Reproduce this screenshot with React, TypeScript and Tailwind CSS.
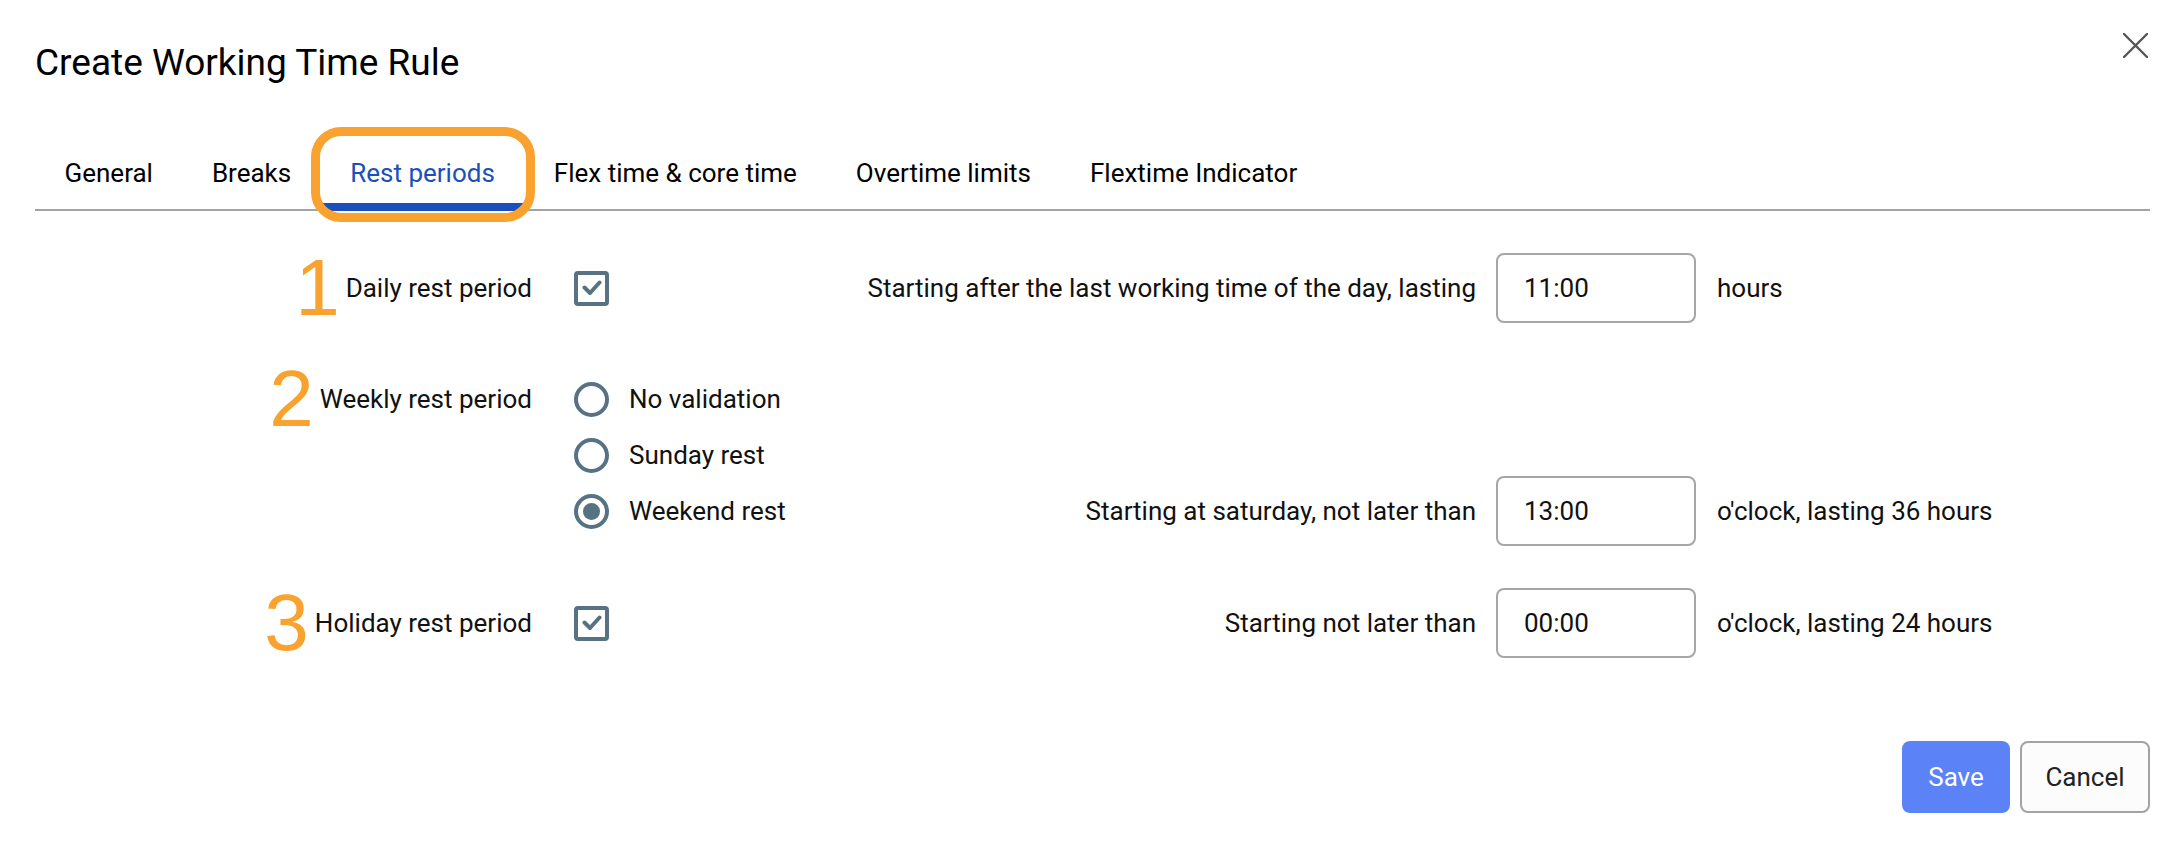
import { ReactNode } from 'react'

const TABS = [
  'General',
  'Breaks',
  'Rest periods',
  'Flex time & core time',
  'Overtime limits',
  'Flextime Indicator',
]

function Marker({ n }: { n: string }) {
  return (
    <span className="font-['Liberation_Sans','Arial',sans-serif] text-[80px] leading-none text-[#f9a22f]">
      {n}
    </span>
  )
}

function Checkbox() {
  return (
    <div className="flex h-[35px] w-[35px] items-center justify-center rounded-[4px] border-[4px] border-[#577383]">
      <svg width="20" height="16" viewBox="0 0 20 16" fill="none">
        <path
          d="M2.5 7.5 L8 13 L17.5 2.5"
          stroke="#577383"
          strokeWidth="4"
          strokeLinecap="round"
          strokeLinejoin="round"
        />
      </svg>
    </div>
  )
}

function Radio({ checked, label }: { checked?: boolean; label: string }) {
  return (
    <div className="flex items-center gap-[20px]">
      <div className="flex h-[35px] w-[35px] items-center justify-center rounded-full border-[4px] border-[#577383]">
        {checked && <div className="h-[17px] w-[17px] rounded-full bg-[#577383]" />}
      </div>
      <span>{label}</span>
    </div>
  )
}

function TimeInput({ value }: { value: string }) {
  return (
    <div className="ml-[20px] flex h-[70px] w-[200px] items-center rounded-[8px] border-2 border-[#a6a6a6] pl-[26px] text-[#111]">
      {value}
    </div>
  )
}

function Row({
  height,
  label,
  marker,
  control,
  desc,
  value,
  suffix,
  className = '',
}: {
  height: string
  label?: string
  marker?: string
  control?: ReactNode
  desc?: string
  value?: string
  suffix?: string
  className?: string
}) {
  return (
    <div className={`flex items-center ${height} ${className}`}>
      <div className="flex w-[497px] items-center justify-end gap-[6px]">
        {marker && <Marker n={marker} />}
        {label && <span>{label}</span>}
      </div>
      <div className="ml-[42px] flex w-[902px] items-center justify-between">
        <div>{control}</div>
        {desc && <span>{desc}</span>}
      </div>
      {value && <TimeInput value={value} />}
      {suffix && <span className="ml-[21px]">{suffix}</span>}
    </div>
  )
}

export default function App() {
  return (
    <div className="min-h-screen bg-white pl-[35px] pr-[30px] font-['Roboto',sans-serif] text-[26px] text-[#111]">
      {/* Header */}
      <div className="flex items-start justify-between pt-[33px]">
        <h1 className="mt-[12px] text-[37px] leading-[36px] font-normal text-black">
          Create Working Time Rule
        </h1>
        <button className="mr-[2px]">
          <svg width="25" height="25" viewBox="0 0 25 25" fill="none">
            <path d="M1 1 L24 24 M24 1 L1 24" stroke="#555" strokeWidth="2.4" strokeLinecap="round" />
          </svg>
        </button>
      </div>

      {/* Tabs */}
      <div className="mt-[77px] flex border-b-2 border-[#a3a3a3]">
        {TABS.map((t) => {
          const active = t === 'Rest periods'
          return (
            <div
              key={t}
              className={`relative -mb-[2px] border-b-[8px] px-[29.5px] pb-[15px] leading-[30px] ${
                active ? 'border-[#1b4fbb] text-[#1b4fbb]' : 'border-transparent text-black'
              }`}
            >
              {t}
              {active && (
                <div className="pointer-events-none absolute -top-[31px] -right-[11px] -bottom-[19px] -left-[10px] rounded-[30px] border-[9px] border-[#f9a22f]" />
              )}
            </div>
          )
        })}
      </div>

      {/* Form */}
      <div className="mt-[42px]">
        <Row
          height="h-[70px]"
          marker="1"
          label="Daily rest period"
          control={<Checkbox />}
          desc="Starting after the last working time of the day, lasting"
          value="11:00"
          suffix="hours"
        />
        <Row
          height="h-[56px]"
          className="mt-[48px]"
          marker="2"
          label="Weekly rest period"
          control={<Radio label="No validation" />}
        />
        <Row height="h-[56px]" control={<Radio label="Sunday rest" />} />
        <Row
          height="h-[56px]"
          control={<Radio checked label="Weekend rest" />}
          desc="Starting at saturday, not later than"
          value="13:00"
          suffix="o'clock, lasting 36 hours"
        />
        <Row
          height="h-[70px]"
          className="mt-[49px]"
          marker="3"
          label="Holiday rest period"
          control={<Checkbox />}
          desc="Starting not later than"
          value="00:00"
          suffix="o'clock, lasting 24 hours"
        />
      </div>

      {/* Footer */}
      <div className="mt-[83px] flex justify-end gap-[10px]">
        <button className="h-[72px] w-[108px] rounded-[8px] bg-[#5b83f7] text-white">Save</button>
        <button className="h-[72px] w-[130px] rounded-[8px] border-2 border-[#a3a3a3] bg-[#fcfcfc] text-[#222]">
          Cancel
        </button>
      </div>
    </div>
  )
}
